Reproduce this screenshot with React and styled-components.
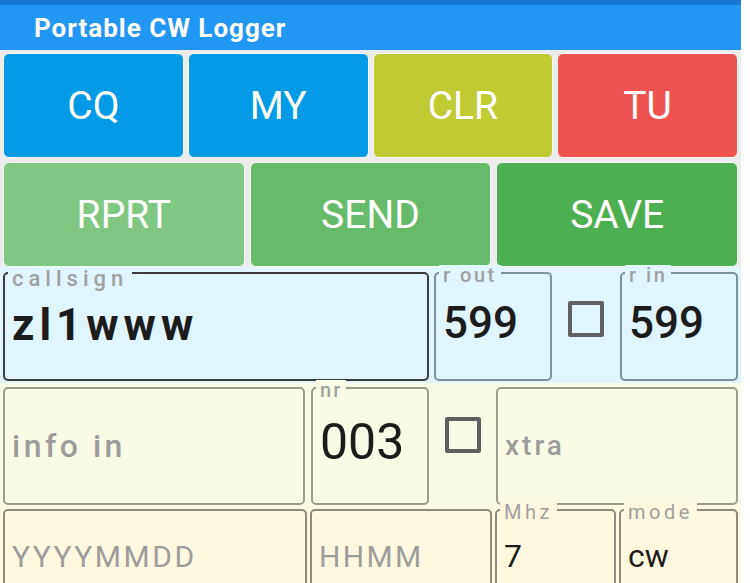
import React from 'react';
import styled, { createGlobalStyle } from 'styled-components';

const GlobalStyle = createGlobalStyle`
  body {
    margin: 0;
    background: #ffffff;
    font-family: Roboto, 'Noto Sans', sans-serif;
  }
`;

const Page = styled.div`
  width: 741px;
  background: #ececec;
  font-family: Roboto, 'Noto Sans', sans-serif;
`;

const TitleBar = styled.header`
  height: 45px;
  border-top: 5px solid #1976d2;
  background: #2196f3;
  display: flex;
  align-items: center;
  padding-left: 34px;
  color: #ffffff;
  font-size: 26px;
  font-weight: 700;
  letter-spacing: 1px;
`;

const ButtonGrid = styled.div`
  display: grid;
  grid-template-columns: repeat(${(p) => p.$cols}, 1fr);
  gap: ${(p) => p.$gap}px;
  padding: ${(p) => p.$top}px 3px 0 3px;
`;

const KeyButton = styled.button`
  height: 105px;
  border: 1px solid #f7f7f7;
  border-radius: 6px;
  background: ${(p) => p.$color};
  color: #ffffff;
  font-family: Roboto, sans-serif;
  font-size: 39px;
  font-weight: 400;
  padding: 0;
  cursor: pointer;
`;

const FieldRow = styled.div`
  display: grid;
  grid-template-columns: ${(p) => p.$cols};
  column-gap: ${(p) => p.$gap || 0}px;
  padding: ${(p) => p.$pad};
  background: ${(p) => p.$bg};
  height: ${(p) => p.$h}px;
  box-sizing: border-box;
`;

const Field = styled.div`
  position: relative;
  box-sizing: border-box;
  min-width: 0;
  margin-right: ${(p) => p.$mr || 0}px;
  border: 2px solid ${(p) => p.$border};
  border-radius: 5px;
  background: inherit;
  display: flex;
  align-items: center;
`;

const Label = styled.span`
  position: absolute;
  top: ${(p) => p.$top}px;
  left: 3px;
  padding: 0 4px;
  background: inherit;
  font-size: ${(p) => p.$size}px;
  line-height: 1;
  font-weight: ${(p) => p.$weight || 500};
  letter-spacing: ${(p) => p.$ls}px;
  color: #a0a0a0;
  white-space: nowrap;
`;

const Entry = styled.input`
  width: 100%;
  min-width: 0;
  box-sizing: border-box;
  border: none;
  outline: none;
  background: transparent;
  padding: 0 0 ${(p) => p.$lift || 0}px 7px;
  font-family: Roboto, sans-serif;
  font-size: ${(p) => p.$size}px;
  font-weight: ${(p) => p.$weight || 400};
  letter-spacing: ${(p) => p.$ls || 0}px;
  color: #1c1c1c;

  &::placeholder {
    color: #9c9c9c;
    opacity: 1;
  }
`;

const CheckCell = styled.div`
  display: flex;
  align-items: center;
  justify-content: center;
  padding-bottom: ${(p) => p.$lift}px;
`;

const Check = styled.input.attrs({ type: 'checkbox' })`
  appearance: none;
  margin: 0;
  width: 36px;
  height: 36px;
  box-sizing: border-box;
  border: 4px solid #606060;
  border-radius: 2px;
  background: transparent;
`;

const keysTop = [
  { text: 'CQ', color: '#039be5' },
  { text: 'MY', color: '#039be5' },
  { text: 'CLR', color: '#c0ca33' },
  { text: 'TU', color: '#ef5350' },
];

const keysBottom = [
  { text: 'RPRT', color: '#81c784' },
  { text: 'SEND', color: '#66bb6a' },
  { text: 'SAVE', color: '#4caf50' },
];

const App = () => {
  return (
    <>
      <GlobalStyle />
      <Page>
        <TitleBar>Portable CW Logger</TitleBar>

        <ButtonGrid $cols={4} $gap={4} $top={3}>
          {keysTop.map((k) => (
            <KeyButton key={k.text} $color={k.color}>{k.text}</KeyButton>
          ))}
        </ButtonGrid>
        <ButtonGrid $cols={3} $gap={5} $top={4}>
          {keysBottom.map((k) => (
            <KeyButton key={k.text} $color={k.color}>{k.text}</KeyButton>
          ))}
        </ButtonGrid>

        <FieldRow $bg="#e1f5fe" $pad="5px 3px 2px 3px" $h={116} $cols="431px 118px 68px 118px">
          <Field $border="#3a3a3a" $mr={5}>
            <Label $top={-6} $size={22} $ls={5}>callsign</Label>
            <Entry defaultValue="zl1www" $size={44} $weight={700} $ls={5} $lift={4} />
          </Field>
          <Field $border="#7d919b">
            <Label $top={-9} $size={20} $ls={2.5}>r out</Label>
            <Entry defaultValue="599" $size={44} $weight={500} $lift={8} />
          </Field>
          <CheckCell $lift={16}>
            <Check />
          </CheckCell>
          <Field $border="#7d919b">
            <Label $top={-9} $size={20} $ls={2.5}>r in</Label>
            <Entry defaultValue="599" $size={44} $weight={500} $lift={8} />
          </Field>
        </FieldRow>

        <FieldRow $bg="#f9fbe7" $pad="4px 3px 2px 3px" $h={124} $cols="308px 118px 67px 242px">
          <Field $border="#9c9c8c" $mr={6}>
            <Entry placeholder="info in" $size={32} $weight={500} $ls={3.5} />
          </Field>
          <Field $border="#9c9c8c">
            <Label $top={-9} $size={20} $ls={2}>nr</Label>
            <Entry defaultValue="003" $size={50} $lift={8} />
          </Field>
          <CheckCell $lift={22}>
            <Check />
          </CheckCell>
          <Field $border="#9c9c8c">
            <Entry placeholder="xtra" $size={28} $weight={500} $ls={3} $lift={2} />
          </Field>
        </FieldRow>

        <FieldRow $bg="#fff8e1" $pad="2px 3px 0 3px" $h={102} $gap={3} $cols="304px 182px 121px 1fr">
          <Field $border="#8e8b7e">
            <Entry placeholder="YYYYMMDD" $size={30} $ls={2.5} $lift={6} />
          </Field>
          <Field $border="#8e8b7e">
            <Entry placeholder="HHMM" $size={30} $ls={2.3} $lift={6} />
          </Field>
          <Field $border="#8e8b7e">
            <Label $top={-9} $size={20} $ls={3.5} $weight={400}>Mhz</Label>
            <Entry defaultValue="7" $size={32} $lift={6} />
          </Field>
          <Field $border="#8e8b7e">
            <Label $top={-9} $size={20} $ls={3.5} $weight={400}>mode</Label>
            <Entry defaultValue="cw" $size={32} $lift={6} />
          </Field>
        </FieldRow>
      </Page>
    </>
  );
};

export default App;
